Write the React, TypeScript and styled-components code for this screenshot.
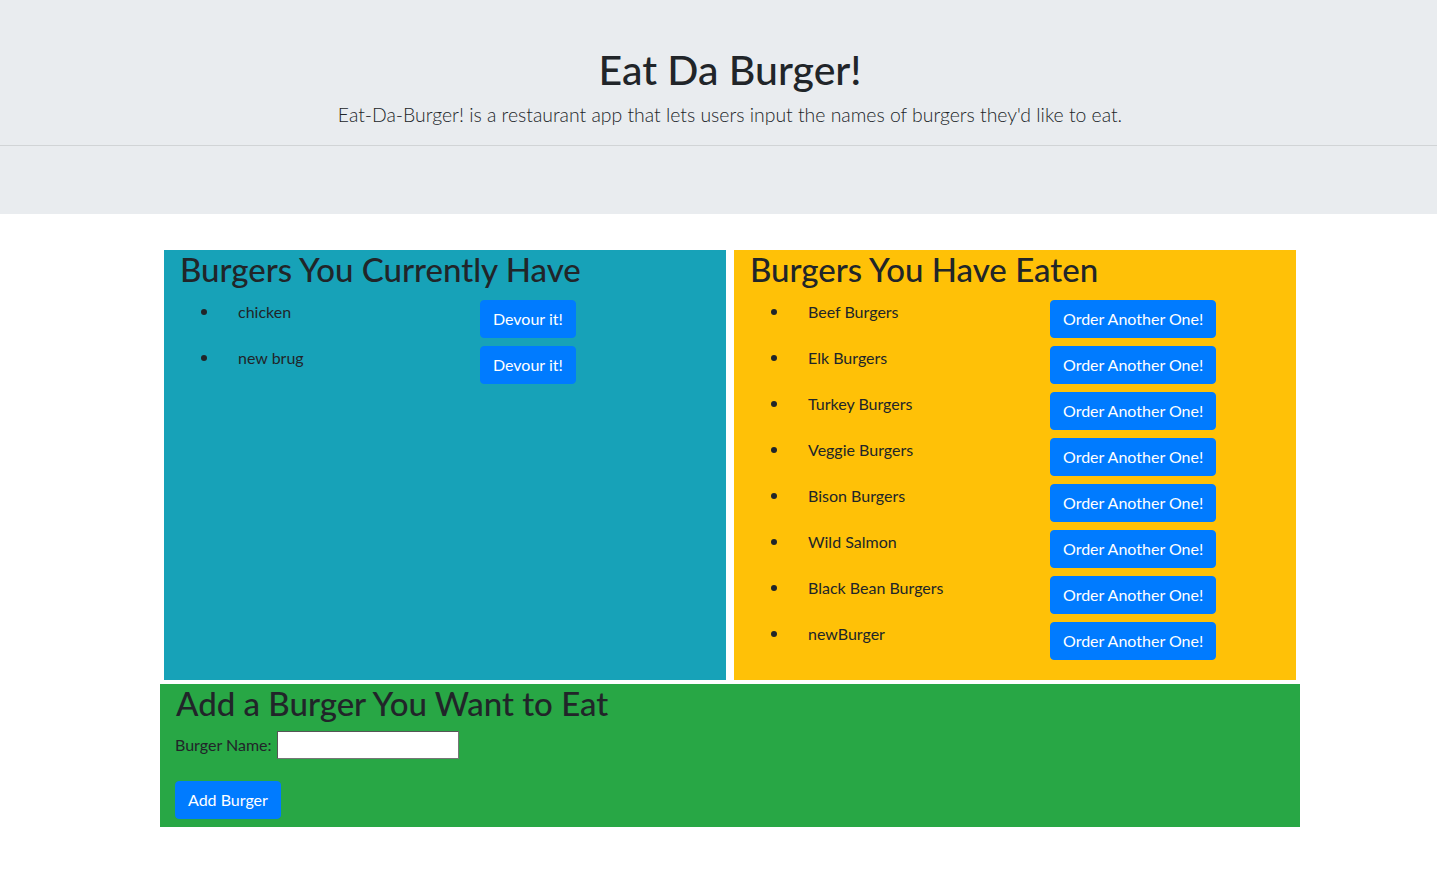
import React from "react";
import styled, { createGlobalStyle } from "styled-components";

const Global = createGlobalStyle`
  html, body { margin: 0; padding: 0; background: #fff; }
  body {
    min-width: 1460px;
    font-family: Lato, "Open Sans", sans-serif;
    font-size: 16px;
    line-height: 1.5;
    color: #212529;
  }
  * { box-sizing: border-box; }
`;

const Jumbotron = styled.header`
  background: #e9ecef;
  height: 214px;
  padding-top: 46px;
  text-align: center;
`;

const Title = styled.h1`
  margin: 0 0 6px;
  font-size: 41px;
  font-weight: 500;
  line-height: 48px;
`;

const Lead = styled.p`
  margin: 0 0 15px;
  font-size: 19.4px;
  font-weight: 300;
  line-height: 30px;
`;

const Rule = styled.hr`
  margin: 0;
  border: 0;
  border-top: 1px solid rgba(0, 0, 0, 0.1);
`;

const Container = styled.main`
  width: 1140px;
  margin: 36px auto 0;
`;

const Row = styled.div`
  display: grid;
  grid-template-columns: 1fr 1fr;
`;

const Panel = styled.section<{ $bg: string }>`
  background: ${(p) => p.$bg};
  margin: 0 4px;
  padding: 0 16px 12px;
  min-height: 430px;
`;

const PanelTitle = styled.h2`
  margin: 0 0 12px;
  font-size: 33px;
  font-weight: 500;
  line-height: 38px;
`;

const List = styled.ul`
  margin: 0;
  padding: 0;
  list-style: none;
`;

const Item = styled.li`
  display: flex;
  align-items: flex-start;
  margin-bottom: 8px;
`;

const Bullet = styled.span`
  flex: none;
  width: 6px;
  height: 6px;
  margin: 9px 31px 0 21px;
  border-radius: 50%;
  background: #212529;
`;

const ItemName = styled.span`
  width: 242px;
  line-height: 24px;
`;

const Button = styled.button`
  font-family: inherit;
  font-size: 16px;
  line-height: 24px;
  color: #fff;
  background: #007bff;
  border: 1px solid #007bff;
  border-radius: 4px;
  padding: 6px 12px;
  cursor: pointer;
`;

const AddPanel = styled.section`
  background: #28a745;
  margin-top: 4px;
  padding: 0 16px 8px 15px;
`;

const AddTitle = styled.h2`
  margin: 0 0 9px 1px;
  font-size: 33px;
  font-weight: 500;
  line-height: 38px;
`;

const Field = styled.div`
  display: flex;
  align-items: center;
  gap: 5px;
  margin-bottom: 22px;
  font-size: 16px;
`;

const Input = styled.input`
  width: 182px;
  height: 28px;
  border: 1px solid #767676;
  border-top-color: #555;
  border-left-color: #555;
  background: #fff;
  padding: 1px 2px;
  font-family: inherit;
`;

const current = ["chicken", "new brug"];
const eaten = [
  "Beef Burgers",
  "Elk Burgers",
  "Turkey Burgers",
  "Veggie Burgers",
  "Bison Burgers",
  "Wild Salmon",
  "Black Bean Burgers",
  "newBurger",
];

export default function App() {
  return (
    <>
      <Global />
      <Jumbotron>
        <Title>Eat Da Burger!</Title>
        <Lead>
          Eat-Da-Burger! is a restaurant app that lets users input the names of burgers they'd like to eat.
        </Lead>
        <Rule />
      </Jumbotron>
      <Container>
        <Row>
          <Panel $bg="#17a2b8">
            <PanelTitle>Burgers You Currently Have</PanelTitle>
            <List>
              {current.map((b) => (
                <Item key={b}>
                  <Bullet />
                  <ItemName>{b}</ItemName>
                  <Button>Devour it!</Button>
                </Item>
              ))}
            </List>
          </Panel>
          <Panel $bg="#ffc107">
            <PanelTitle>Burgers You Have Eaten</PanelTitle>
            <List>
              {eaten.map((b) => (
                <Item key={b}>
                  <Bullet />
                  <ItemName>{b}</ItemName>
                  <Button>Order Another One!</Button>
                </Item>
              ))}
            </List>
          </Panel>
        </Row>
        <AddPanel>
          <AddTitle>Add a Burger You Want to Eat</AddTitle>
          <Field>
            <label htmlFor="burger">Burger Name:</label>
            <Input id="burger" type="text" />
          </Field>
          <Button>Add Burger</Button>
        </AddPanel>
      </Container>
    </>
  );
}
